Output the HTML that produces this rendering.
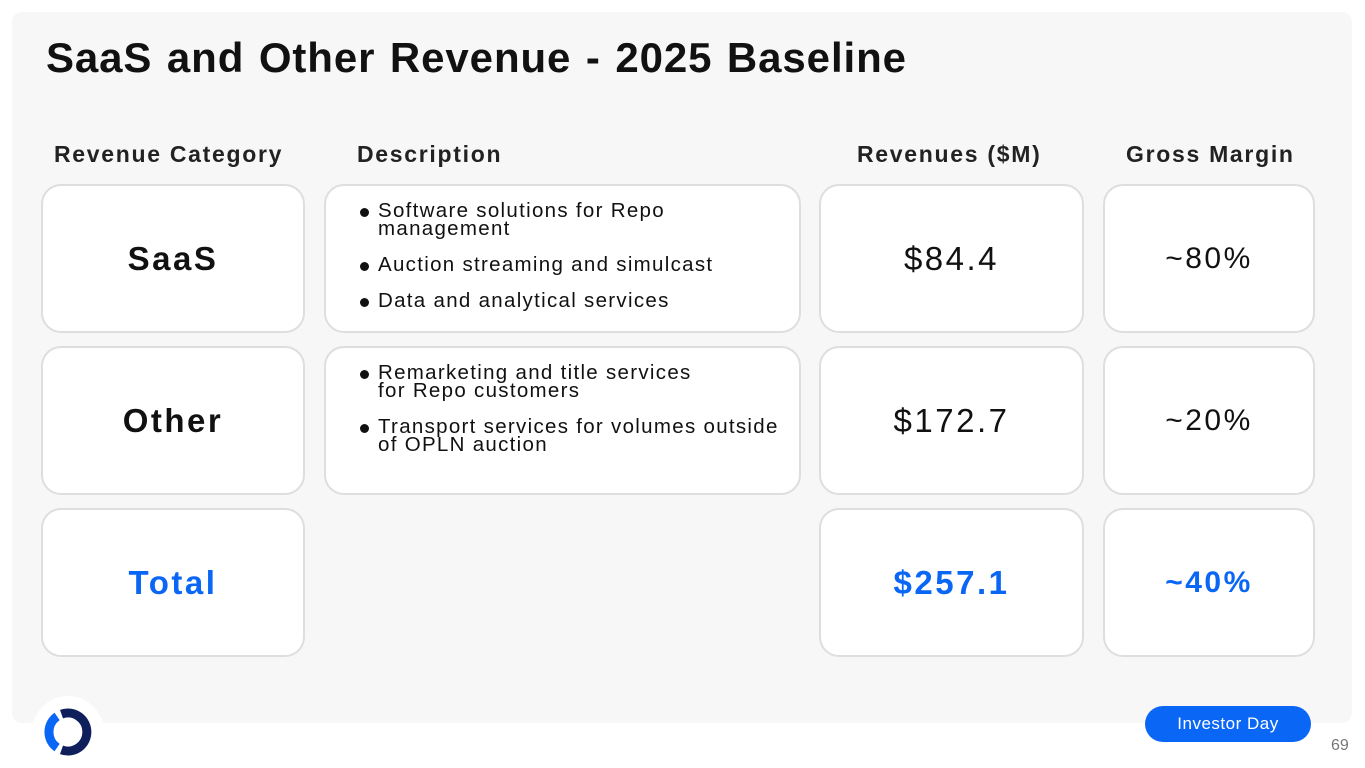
<!DOCTYPE html>
<html><head><meta charset="utf-8"><style>
body{margin:0;width:1365px;height:768px;background:#fff;font-family:"Liberation Sans",sans-serif;position:relative;overflow:hidden;color:#111}
.panel{position:absolute;left:12px;top:12px;width:1340px;height:711px;background:#f7f7f7;border-radius:10px}
h1{position:absolute;left:46px;top:34px;margin:0;font-size:42px;font-weight:bold;color:#111;letter-spacing:0.9px;word-spacing:2px}
.hd{position:absolute;top:141px;font-size:23px;font-weight:bold;color:#222;letter-spacing:1.7px}
.c{position:absolute;background:#fff;border:2px solid #dedede;border-radius:20px;box-sizing:border-box;display:flex;align-items:center;justify-content:center;font-size:33px;letter-spacing:2.5px}
.b{font-weight:bold}
.blue{color:#0a66f5;font-weight:bold}
.d{justify-content:flex-start;align-items:flex-start;font-size:20.5px;padding:16px 0 0 32px;flex-direction:column;letter-spacing:1.3px}
.d div{position:relative;padding-left:20px;line-height:18px;margin-bottom:18px}
.d div:before{content:"";position:absolute;left:2px;top:6px;width:9px;height:9px;border-radius:50%;background:#111}
.pill{position:absolute;left:1145px;top:706px;width:166px;height:36px;background:#0a66f5;border-radius:18px;color:#fff;font-size:17px;display:flex;align-items:center;justify-content:center;letter-spacing:0.5px}
</style></head><body>
<div class="panel"></div>
<h1>SaaS and Other Revenue - 2025 Baseline</h1>
<div class="hd" style="left:54px">Revenue Category</div>
<div class="hd" style="left:357px">Description</div>
<div class="hd" style="left:857px">Revenues ($M)</div>
<div class="hd" style="left:1126px">Gross Margin</div>

<div class="c b" style="left:41px;top:184px;width:264px;height:149px">SaaS</div>
<div class="c d" style="left:324px;top:184px;width:477px;height:149px"><div>Software solutions for Repo<br>management</div><div>Auction streaming and simulcast</div><div>Data and analytical services</div></div>
<div class="c" style="left:819px;top:184px;width:265px;height:149px">$84.4</div>
<div class="c" style="left:1103px;top:184px;width:212px;height:149px;font-size:30px">~80%</div>

<div class="c b" style="left:41px;top:346px;width:264px;height:149px">Other</div>
<div class="c d" style="left:324px;top:346px;width:477px;height:149px"><div>Remarketing and title services<br>for Repo customers</div><div>Transport services for volumes outside<br>of OPLN auction</div></div>
<div class="c" style="left:819px;top:346px;width:265px;height:149px">$172.7</div>
<div class="c" style="left:1103px;top:346px;width:212px;height:149px;font-size:30px">~20%</div>

<div class="c blue" style="left:41px;top:508px;width:264px;height:149px">Total</div>
<div class="c blue" style="left:819px;top:508px;width:265px;height:149px">$257.1</div>
<div class="c blue" style="left:1103px;top:508px;width:212px;height:149px;font-size:30px">~40%</div>

<div style="position:absolute;left:32px;top:696px;width:72px;height:72px;border-radius:50%;background:#fff"></div>
<svg style="position:absolute;left:40px;top:704px" width="56" height="56" viewBox="0 0 56 56">
<path d="M21.5,10.1 A19,19 0 1 1 21.5,45.9" fill="none" stroke="#0e1f5c" stroke-width="9"/>
<path d="M17.1,12.4 A19,19 0 0 0 17.1,43.6" fill="none" stroke="#0a66f5" stroke-width="9"/>
</svg>
<div class="pill">Investor Day</div>
<div style="position:absolute;left:1331px;top:737px;font-size:16px;color:#777">69</div>
</body></html>
